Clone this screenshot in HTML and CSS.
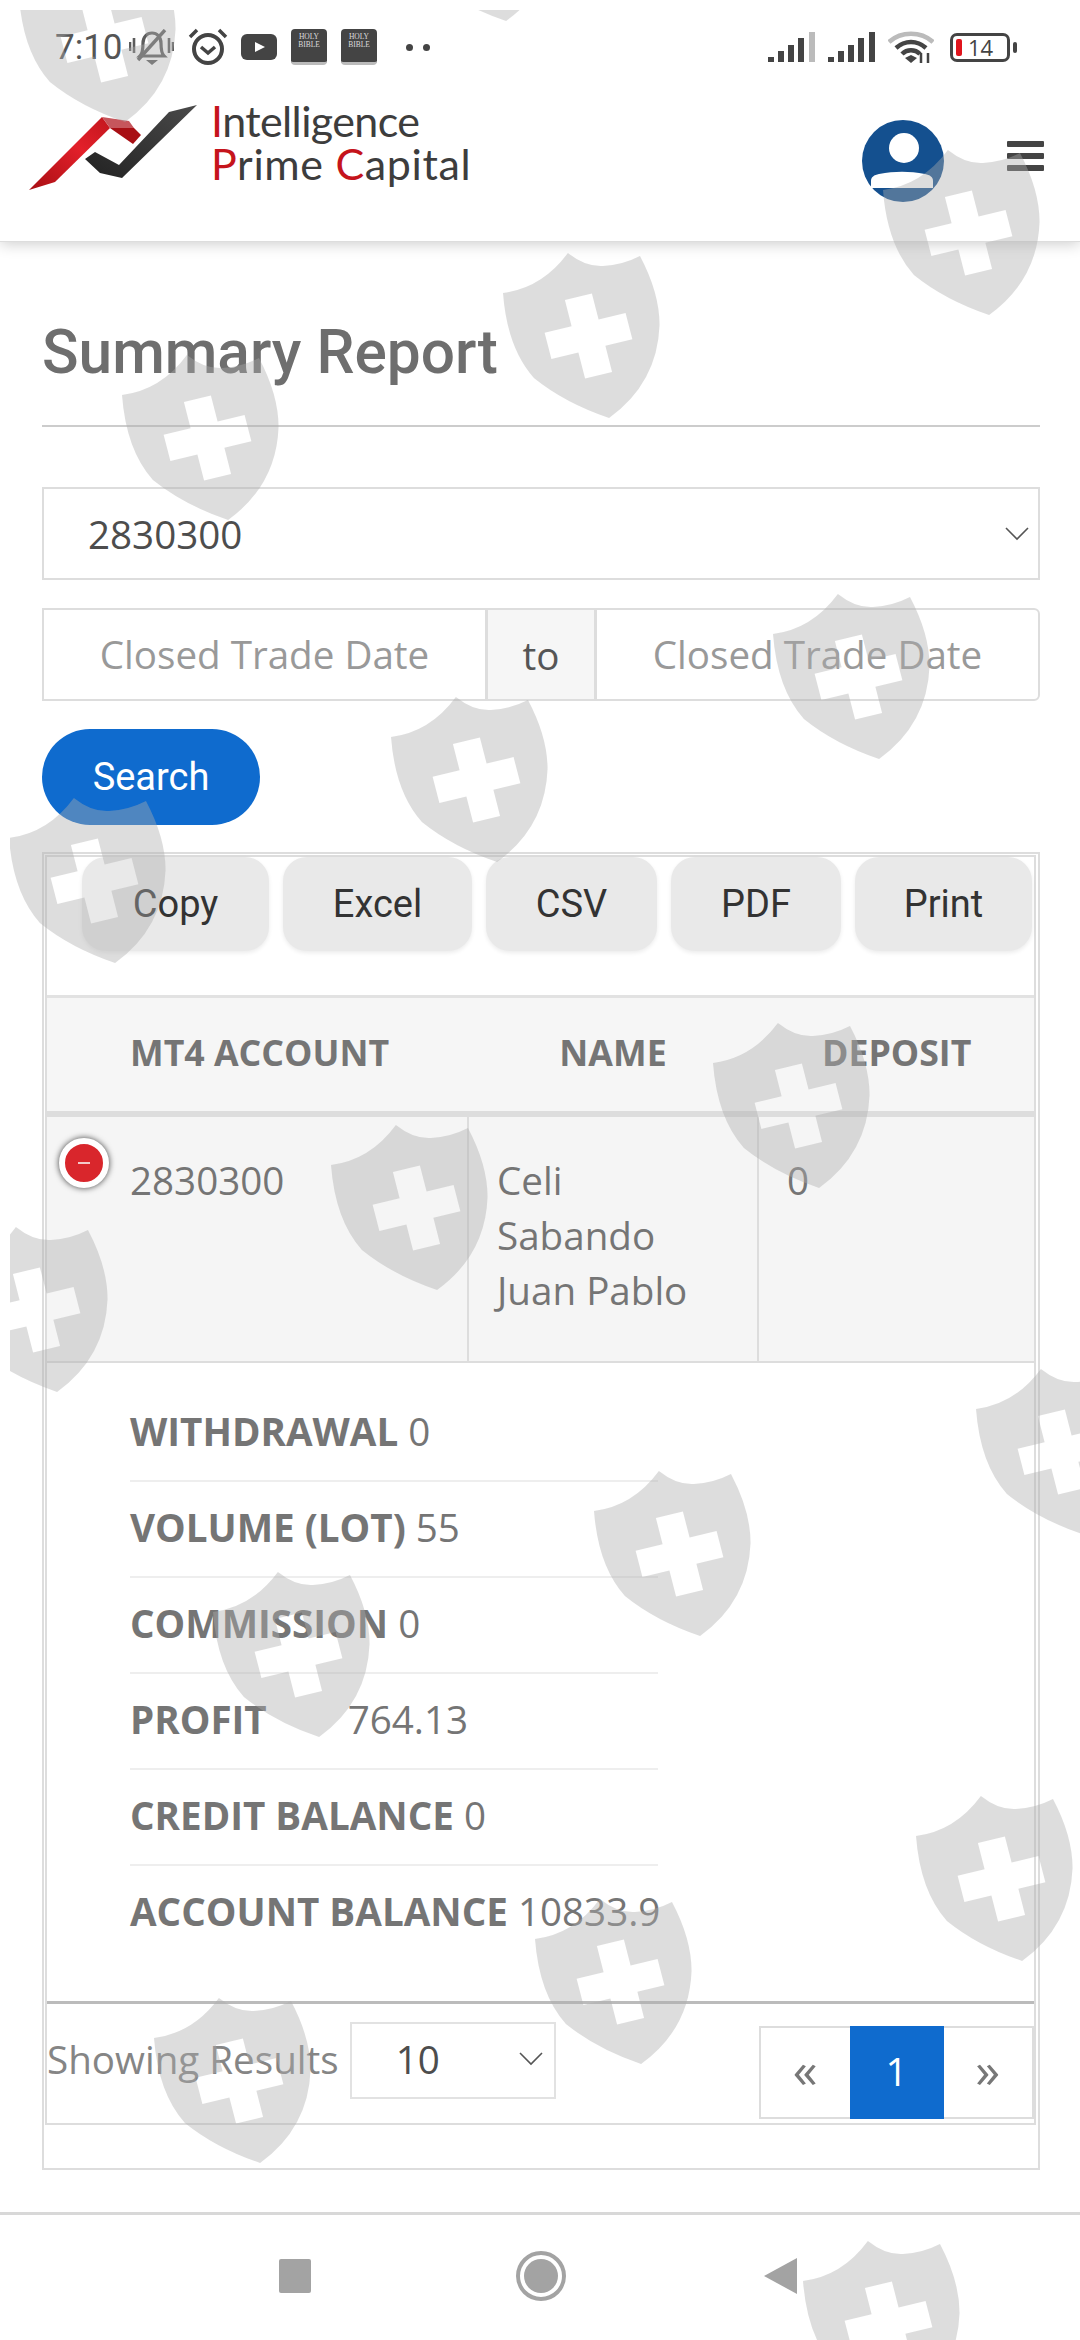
FILE: index.html
```html
<!DOCTYPE html>
<html lang="en">
<head>
    <meta charset="UTF-8">
    <meta name="viewport" content="width=device-width, initial-scale=1.0">
    <title>Summary Report</title>
    <link rel="stylesheet" href="styles.css">
</head>
<body>
    <header class="topbar">
        <div class="status">
            <span class="clock">7:10</span>
            <svg class="ic-bell" viewBox="0 0 45 37"><path d="M11 27c3-3 3-8 3-13 0-6 4-10 9-10s9 4 9 10c0 5 0 10 3 13z" fill="none" stroke="#5c5c5c" stroke-width="3.2"/><path d="M17 31h12l-6 5z" fill="#5c5c5c"/><path d="M36 1 9 31" stroke="#5c5c5c" stroke-width="3.4"/><path d="M1 13v9M5 9v15M40 9v15M44 13v9" stroke="#5c5c5c" stroke-width="2.6"/></svg>
            <svg class="ic-alarm" viewBox="0 0 40 38"><circle cx="20" cy="21" r="14" fill="none" stroke="#444" stroke-width="4"/><path d="m13 19 7 6 7-6" fill="none" stroke="#444" stroke-width="3.5"/><path d="M2 9 9 2M38 9l-7-7" stroke="#444" stroke-width="3.5"/></svg>
            <svg class="ic-yt" viewBox="0 0 36 26"><rect width="36" height="26" rx="6" fill="#444"/><path d="m14 8 10 5-10 5z" fill="#fff"/></svg>
            <span class="bible"><span>HOLY</span><span>BIBLE</span></span>
            <span class="bible"><span>HOLY</span><span>BIBLE</span></span>
            <span class="dots"><i></i><i></i></span>
            <span class="status-right">
                <svg class="ic-signal" viewBox="0 0 47 30"><path d="M0 25h6v5H0zM10 19h6v11h-6zM20 13h6v17h-6zM30 6h6v24h-6z" fill="#444"/><path d="M41 0h6v30h-6z" fill="#bbb"/></svg>
                <svg class="ic-signal" viewBox="0 0 47 30"><path d="M0 25h6v5H0zM10 19h6v11h-6zM20 13h6v17h-6zM30 6h6v24h-6zM41 0h6v30h-6z" fill="#444"/></svg>
                <svg class="ic-wifi" viewBox="0 0 46 32"><path d="M1 11C13 0 33 0 45 11" fill="none" stroke="#bbb" stroke-width="4.5"/><path d="M8 17c9-8 21-8 30 0M14 23c5-5 13-5 18 0" fill="none" stroke="#444" stroke-width="4.5"/><path d="m17 27 6-3 6 3-6 5z" fill="#444"/><path d="M33 22v10M40 22v10" stroke="#444" stroke-width="2.5"/></svg>
                <span class="battery"><i></i>14</span>
            </span>
        </div>
        <div class="brand">
            <a class="logo">
                <svg class="logo-mark" viewBox="0 0 175 90">
                    <defs>
                        <linearGradient id="redg" x1="0" y1="1" x2="1" y2="0"><stop offset="0" stop-color="#a80f14"/><stop offset=".6" stop-color="#e3202a"/><stop offset="1" stop-color="#c2161d"/></linearGradient>
                        <linearGradient id="darkg" x1="0" y1="1" x2="1" y2="0"><stop offset="0" stop-color="#222"/><stop offset="1" stop-color="#4a4a4a"/></linearGradient>
                    </defs>
                    <path d="M0 87 73 14l8 11-55 54z" fill="url(#redg)"/>
                    <path d="M81 25h24l7 7-8 9z" fill="#a80f14"/>
                    <path d="m73 14 27 4 5 7H81z" fill="#c6565c"/>
                    <path d="m56 56 10-7 24 13 50-53 28-7-75 73-22-5z" fill="url(#darkg)"/>
                </svg>
                <span class="logo-text">
                    <span class="logo-line1"><b>I</b>ntelligence</span>
                    <span class="logo-line2"><b>P</b>rime <b>C</b>apital</span>
                </span>
            </a>
            <svg class="avatar" viewBox="0 0 84 84"><circle cx="42" cy="42" r="41" fill="#14508f"/><circle cx="43" cy="29" r="15" fill="#fff"/><path d="M10 69V62c0-4 3-6 8-7 16-3 30-3 46 0 5 1 8 3 8 7v7z" fill="#fff"/></svg>
            <span class="burger"><i></i><i></i><i></i></span>
        </div>
    </header>

    <main class="page">
        <h1>Summary Report</h1>

        <div class="pick">
            <span>2830300</span>
            <svg class="chev" viewBox="0 0 24 14"><path d="m1 1 11 11L23 1" fill="none" stroke="#555" stroke-width="1.6"/></svg>
        </div>

        <div class="dates">
            <input type="text" placeholder="Closed Trade Date">
            <span class="to">to</span>
            <input type="text" placeholder="Closed Trade Date">
        </div>

        <button class="search">Search</button>

        <div class="outer">
            <div class="inner">
                <div class="tools">
                    <button class="tool tool-copy">Copy</button>
                    <button class="tool tool-excel">Excel</button>
                    <button class="tool tool-csv">CSV</button>
                    <button class="tool tool-pdf">PDF</button>
                    <button class="tool tool-print">Print</button>
                </div>

                <table class="report">
                    <thead>
                        <tr>
                            <th class="col-acc">MT4 ACCOUNT</th>
                            <th class="col-name">NAME</th>
                            <th class="col-dep">DEPOSIT</th>
                        </tr>
                    </thead>
                    <tbody>
                        <tr class="main-row">
                            <td class="col-acc"><span class="minus"><i></i></span>2830300</td>
                            <td class="col-name">Celi<br>Sabando<br>Juan Pablo</td>
                            <td class="col-dep">0</td>
                        </tr>
                        <tr>
                            <td colspan="3" class="detail-cell">
                                <ul class="details">
                                    <li><b>WITHDRAWAL</b> 0</li>
                                    <li><b>VOLUME (LOT)</b> 55</li>
                                    <li><b>COMMISSION</b> 0</li>
                                    <li><b>PROFIT</b><span class="profit">764.13</span></li>
                                    <li><b>CREDIT BALANCE</b> 0</li>
                                    <li><b>ACCOUNT BALANCE</b> 10833.9</li>
                                </ul>
                            </td>
                        </tr>
                    </tbody>
                </table>

                <div class="foot">
                    <span class="showing">Showing Results</span>
                    <div class="size">
                        <span>10</span>
                        <svg class="chev-small" viewBox="0 0 24 14"><path d="m1 1 11 11L23 1" fill="none" stroke="#555" stroke-width="1.6"/></svg>
                    </div>
                    <div class="pager">
                        <span class="arrow">«</span>
                        <span class="current">1</span>
                        <span class="arrow">»</span>
                    </div>
                </div>
            </div>
        </div>
    </main>

    <nav class="softkeys">
        <svg class="key-square" viewBox="0 0 32 34"><rect width="32" height="34" rx="2" fill="#a3a3a3"/></svg>
        <svg class="key-home" viewBox="0 0 50 50"><circle cx="25" cy="25" r="23" fill="none" stroke="#a3a3a3" stroke-width="4"/><circle cx="25" cy="25" r="17" fill="#a3a3a3"/></svg>
        <svg class="key-back" viewBox="0 0 33 36"><path d="M0 18 33 0v36z" fill="#a3a3a3"/></svg>
    </nav>

    <!-- watermark over the whole screen -->
    <svg class="watermark" viewBox="10 0 1070 2330" width="1070" height="2330">
        <defs>
            <path id="shield" transform="scale(1.03 1)" fill-rule="evenodd" d="M63 0Q80 14 97 13 116 12 133 3 152 40 152 72 150 130 103 165 60 150 30 125 4 95 0 40 38 35 63 0ZM60.1 47 86.3 40.4 92.8 66.6 119 60.1 125.6 86.3 99.4 92.8 105.9 119 79.7 125.6 73.2 99.4 47 105.9 40.4 79.7 66.6 73.2Z"/>
        </defs>
        <g class="shields">
            <use href="#shield" x="19" y="-53"/>
            <use href="#shield" x="400" y="-154"/>
            <use href="#shield" x="883" y="140"/>
            <use href="#shield" x="503" y="243"/>
            <use href="#shield" x="122" y="345"/>
            <use href="#shield" x="773" y="584"/>
            <use href="#shield" x="391" y="687"/>
            <use href="#shield" x="9" y="788"/>
            <use href="#shield" x="713" y="1013"/>
            <use href="#shield" x="331" y="1115"/>
            <use href="#shield" x="-49" y="1217"/>
            <use href="#shield" x="976" y="1359"/>
            <use href="#shield" x="594" y="1461"/>
            <use href="#shield" x="213" y="1562"/>
            <use href="#shield" x="916" y="1786"/>
            <use href="#shield" x="535" y="1889"/>
            <use href="#shield" x="154" y="1988"/>
            <use href="#shield" x="803" y="2231"/>
        </g>
    </svg>
</body>
</html>
```

FILE: styles.css
```css
* {
    box-sizing: border-box;
}
html, body {
    margin: 0;
    padding: 0;
}
body {
    width: 1080px;
    height: 2340px;
    overflow: hidden;
    position: relative;
    display: flex;
    flex-direction: column;
    background-color: #fff;
    font-family: "Open Sans", sans-serif;
    color: #757575;
}

/* top bar */
.topbar {
    height: 242px;
    flex: none;
    background-color: #fff;
    box-shadow: 0 2px 14px rgba(0, 0, 0, 0.2);
    border-bottom: 1px solid #ddd;
}
.status {
    height: 94px;
    padding: 0 63px 0 55px;
    display: flex;
    align-items: center;
}
.clock {
    font-family: Roboto, sans-serif;
    font-size: 35px;
    color: #555;
    width: 74px;
}
.ic-bell {
    width: 45px;
    height: 37px;
    margin-right: 14px;
}
.ic-alarm {
    width: 40px;
    height: 38px;
    margin-right: 13px;
}
.ic-yt {
    width: 36px;
    height: 26px;
    margin-right: 14px;
}
.bible {
    width: 36px;
    height: 36px;
    margin-right: 14px;
    border-radius: 4px;
    background-color: #444;
    border-bottom: 3px solid #bbb;
    color: #ddd;
    font-family: "Liberation Serif", serif;
    font-size: 7.5px;
    line-height: 8px;
    padding-top: 4px;
    display: flex;
    flex-direction: column;
    align-items: center;
}
.dots {
    display: flex;
    gap: 10px;
    margin-left: 15px;
}
.dots i {
    width: 7px;
    height: 7px;
    border-radius: 50%;
    background-color: #444;
}
.status-right {
    margin-left: auto;
    margin-right: 7px;
    display: flex;
    align-items: center;
    gap: 13px;
}
.ic-signal {
    width: 47px;
    height: 30px;
}
.ic-wifi {
    width: 46px;
    height: 32px;
    margin-right: 3px;
}
.battery {
    position: relative;
    width: 60px;
    height: 29px;
    border: 3px solid #444;
    border-radius: 7px;
    font-size: 22px;
    line-height: 23px;
    color: #444;
    padding-left: 15px;
}
.battery i {
    position: absolute;
    left: 3px;
    top: 3px;
    width: 6px;
    height: 17px;
    border-radius: 2px;
    background-color: #e0141c;
}
.battery::after {
    content: "";
    position: absolute;
    right: -10px;
    top: 6px;
    width: 4px;
    height: 11px;
    border-radius: 2px;
    background-color: #444;
}
.brand {
    height: 147px;
    padding: 9px 36px 0 29px;
    display: flex;
    align-items: flex-start;
}
.logo {
    display: flex;
    align-items: flex-start;
}
.logo-mark {
    width: 175px;
    height: 90px;
}
.logo-text {
    margin-left: 7px;
    margin-top: -4px;
    display: flex;
    flex-direction: column;
    font-family: Lato, sans-serif;
    font-weight: 400;
    font-size: 43px;
    line-height: 43px;
    color: #3d3d3d;
}
.logo-line1 {
    letter-spacing: -0.6px;
}
.logo-line2 {
    letter-spacing: 0.65px;
}
.logo-text b {
    font-weight: 400;
    color: #c5141c;
}
.avatar {
    width: 84px;
    height: 84px;
    margin-left: auto;
    margin-top: 16px;
}
.burger {
    width: 37px;
    margin-left: 62px;
    margin-top: 38px;
    display: flex;
    flex-direction: column;
    gap: 6px;
}
.burger i {
    height: 6px;
    border-radius: 1px;
    background-color: #444;
}

/* page */
.page {
    flex: 1;
    padding: 0 40px 0 42px;
}
h1 {
    margin: 82px 0 0;
    height: 103px;
    border-bottom: 2px solid #ccc;
    font-family: Roboto, sans-serif;
    font-weight: 500;
    font-size: 60.4px;
    line-height: 58px;
    color: #6e6e6e;
}
.pick {
    margin-top: 60px;
    height: 93px;
    border: 2px solid #ddd;
    padding: 0 9px 0 44px;
    display: flex;
    align-items: center;
    justify-content: space-between;
    font-size: 38.6px;
    color: #4d4d4d;
}
.chev {
    width: 24px;
    height: 14px;
}
.dates {
    margin-top: 28px;
    height: 93px;
    display: flex;
    border: 2px solid #ddd;
    border-radius: 0 6px 6px 0;
}
.dates input {
    width: 441px;
    flex: 1;
    border: 0;
    background: transparent;
    text-align: center;
    font-family: "Open Sans", sans-serif;
    font-size: 38.6px;
    padding: 0 0 2px;
    min-width: 0;
}
.dates input::placeholder {
    color: #999;
    opacity: 1;
}
.to {
    width: 112px;
    flex: none;
    border-left: 3px solid #ddd;
    border-right: 3px solid #ddd;
    background-color: #f6f6f6;
    display: flex;
    align-items: center;
    justify-content: center;
    font-size: 38.6px;
    color: #555;
}
.search {
    display: block;
    margin-top: 28px;
    width: 218px;
    height: 96px;
    border: 0;
    border-radius: 48px;
    background-color: #0f6bce;
    color: #fff;
    font-family: Roboto, sans-serif;
    font-size: 38px;
    padding: 0;
}
.outer {
    margin-top: 27px;
    height: 1318px;
    border: 2px solid #ddd;
    padding: 1px 2px 0 1px;
}
.inner {
    height: 1270px;
    border: 2px solid #ddd;
}
.tools {
    height: 138px;
    padding-left: 35px;
    display: flex;
    align-items: flex-start;
    gap: 14px;
}
.tool {
    height: 94px;
    border: 0;
    border-radius: 24px;
    background-color: #e9e9e9;
    box-shadow: 0 2px 4px rgba(0, 0, 0, 0.08);
    font-family: Roboto, sans-serif;
    font-size: 38px;
    color: #333;
    padding: 0;
}
.tool-copy { width: 187px; }
.tool-excel { width: 189px; }
.tool-csv { width: 171px; }
.tool-pdf { width: 170px; }
.tool-print { width: 177px; }

.report {
    width: 100%;
    border-collapse: collapse;
    table-layout: fixed;
}
.report th {
    height: 117px;
    padding: 0 0 5px;
    background-color: #f6f6f6;
    border-top: 3px solid #e2e2e2;
    border-bottom: 6px solid #ddd;
    font-size: 35.7px;
    font-weight: 700;
    color: #757575;
    text-align: left;
}
.report th.col-acc,
.main-row .col-acc {
    width: 421px;
    padding-left: 83px;
}
.report th.col-name {
    width: 290px;
    text-align: center;
}
.report th.col-dep {
    padding-left: 64px;
}
.main-row td {
    height: 248px;
    padding-top: 36px;
    vertical-align: top;
    background-color: #f5f5f5;
    border-bottom: 2px solid #ddd;
    font-size: 38.6px;
    line-height: 55px;
}
.main-row .col-acc {
    position: relative;
    border-right: 2px solid #ddd;
}
.main-row .col-name {
    padding-left: 28px;
    border-right: 2px solid #ddd;
}
.main-row .col-dep {
    padding-left: 28px;
}
.minus {
    position: absolute;
    left: 12px;
    top: 21px;
    width: 50px;
    height: 50px;
    border-radius: 50%;
    border: 6px solid #fff;
    background-color: #d9262c;
    box-shadow: 0 0 6px rgba(0, 0, 0, 0.75);
    display: flex;
    align-items: center;
    justify-content: center;
}
.minus i {
    width: 12px;
    height: 2px;
    background-color: #f3c9ca;
}
.detail-cell {
    padding: 0;
    height: 641px;
    vertical-align: top;
    border-bottom: 3px solid #bbb;
}
.details {
    list-style: none;
    margin: 23px 0 0 83px;
    padding: 0;
    width: 528px;
}
.details li {
    height: 96px;
    border-bottom: 2px solid #eee;
    font-size: 38.6px;
    line-height: 91px;
    white-space: nowrap;
}
.details li:last-child {
    border-bottom: 0;
}
.details b {
    font-weight: 700;
}
.profit {
    margin-left: 81px;
}
.foot {
    display: flex;
    align-items: flex-start;
}
.showing {
    margin-top: 29px;
    font-size: 38.6px;
    line-height: 52px;
    color: #858585;
}
.size {
    margin: 18px 0 0 11px;
    width: 206px;
    height: 77px;
    border: 2px solid #e2e2e2;
    padding: 0 11px 3px 44px;
    display: flex;
    align-items: center;
    justify-content: space-between;
    font-size: 38.6px;
    color: #4d4d4d;
}
.chev-small {
    width: 24px;
    height: 14px;
}
.pager {
    margin: 22px 0 0 auto;
    width: 275px;
    height: 93px;
    border: 2px solid #ddd;
    display: flex;
    font-size: 38.6px;
    color: #777;
}
.pager span {
    flex: 1;
    display: flex;
    align-items: center;
    justify-content: center;
    padding-bottom: 4px;
}
.pager .arrow {
    font-size: 50px;
    padding-bottom: 8px;
}
.pager .current {
    flex: none;
    width: 94px;
    margin: -2px 0;
    background-color: #0f6bce;
    color: #fff;
}

/* android buttons */
.softkeys {
    flex: none;
    height: 128px;
    border-top: 3px solid #d8d8d8;
    display: flex;
    align-items: center;
    padding: 0 0 4px 279px;
}
.key-square {
    width: 32px;
    height: 34px;
}
.key-home {
    width: 50px;
    height: 50px;
    margin-left: 205px;
}
.key-back {
    width: 33px;
    height: 36px;
    margin-left: 198px;
}

.watermark {
    position: absolute;
    left: 10px;
    top: 10px;
    pointer-events: none;
}
.shields {
    fill: rgb(172, 172, 172);
    fill-opacity: 0.41;
}
```
